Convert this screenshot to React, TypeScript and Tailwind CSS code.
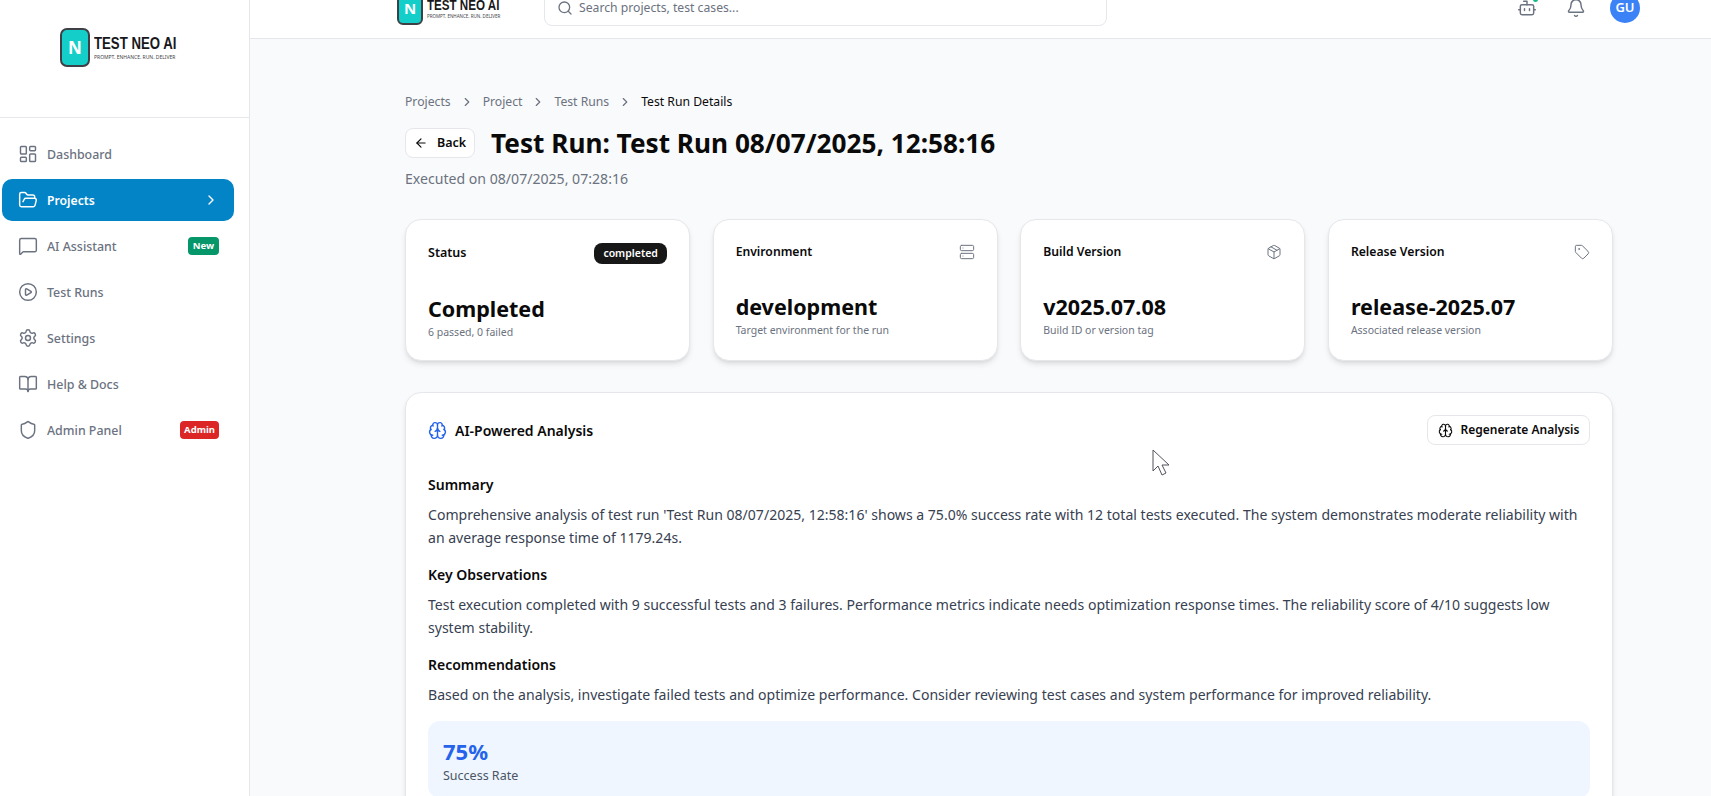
import {
  ArrowLeft,
  Bell,
  BookOpen,
  Bot,
  Brain,
  ChevronRight,
  CirclePlay,
  FolderOpen,
  LayoutDashboard,
  MessageSquare,
  Package,
  Search,
  Server,
  Settings,
  Shield,
  Tag,
} from "lucide-react";

const navItems = [
  { label: "Dashboard", icon: LayoutDashboard },
  { label: "Projects", icon: FolderOpen, active: true },
  { label: "AI Assistant", icon: MessageSquare, badge: "New", badgeClass: "w-[31px] bg-[#059669]" },
  { label: "Test Runs", icon: CirclePlay },
  { label: "Settings", icon: Settings },
  { label: "Help & Docs", icon: BookOpen },
  { label: "Admin Panel", icon: Shield, badge: "Admin", badgeClass: "w-[39px] bg-[#dc2626]" },
];

const crumbs = ["Projects", "Project", "Test Runs"];

const infoCards = [
  { label: "Environment", value: "development", note: "Target environment for the run", icon: Server },
  { label: "Build Version", value: "v2025.07.08", note: "Build ID or version tag", icon: Package },
  { label: "Release Version", value: "release-2025.07", note: "Associated release version", icon: Tag },
];

function Logo({ small }: { small?: boolean }) {
  return (
    <div className="flex items-center">
      <div
        className={
          small
            ? "flex h-[34px] w-[26px] items-center justify-center rounded-[6px] border-2 border-[#3f3f46] bg-[#14cfc9]"
            : "flex h-[39px] w-[30px] items-center justify-center rounded-[7px] border-2 border-[#3f3f46] bg-[#14cfc9]"
        }
      >
        <span className={small ? "text-[15px] font-bold text-white" : "text-[17px] font-bold text-white"}>N</span>
      </div>
      <div className={small ? "ml-[4px] flex w-[72px] flex-col" : "ml-[4px] flex w-[83px] flex-col gap-[2px]"}>
        <span
          className={
            small
              ? "origin-left scale-x-[0.8] font-['Liberation_Sans',sans-serif] text-[14.5px] leading-[16px] font-bold whitespace-nowrap text-[#18181b]"
              : "origin-left scale-x-[0.8] font-['Liberation_Sans',sans-serif] text-[16.5px] leading-[18px] font-bold whitespace-nowrap text-[#18181b]"
          }
        >
          TEST NEO AI
        </span>
        <span
          className={
            small
              ? "text-[4.5px] leading-[6px] whitespace-nowrap text-[#3f3f46]"
              : "text-[5px] leading-[7px] whitespace-nowrap text-[#3f3f46]"
          }
        >
          PROMPT. ENHANCE. RUN. DELIVER
        </span>
      </div>
    </div>
  );
}

export default function App() {
  return (
    <div className="flex h-[796px] w-full overflow-hidden bg-white font-['Noto_Sans',sans-serif] text-[#0a0a0a]">
      <aside className="flex w-[250px] shrink-0 flex-col border-r border-[#e5e7eb] bg-white">
        <div className="flex h-[118px] shrink-0 items-start border-b border-[#e5e7eb] pt-[28px] pl-[60px]">
          <Logo />
        </div>
        <nav className="flex flex-col gap-1 pt-[15px] pr-[15px] pl-[2px]">
          {navItems.map((item) => (
            <div
              key={item.label}
              className={
                item.active
                  ? "flex h-[42px] items-center gap-[9px] rounded-[10px] bg-[#0284c7] pr-[15px] pl-[16px] text-white"
                  : "flex h-[42px] items-center gap-[9px] rounded-[10px] pr-[15px] pl-[16px] text-[#6b7280]"
              }
            >
              <item.icon size={20} strokeWidth={1.75} />
              <span
                className={
                  item.active
                    ? "flex-1 pt-[2px] text-[12.2px] font-semibold"
                    : "flex-1 pt-[2px] text-[12.4px] font-medium"
                }
              >
                {item.label}
              </span>
              {item.active && <ChevronRight size={16} />}
              {item.badge && (
                <span
                  className={`flex h-[18px] items-center justify-center rounded-[4px] text-[9.5px] font-bold text-white ${item.badgeClass}`}
                >
                  {item.badge}
                </span>
              )}
            </div>
          ))}
        </nav>
      </aside>

      <div className="relative flex min-w-0 flex-1 flex-col bg-[#f9fafb]">
        <header className="h-[39px] shrink-0 overflow-hidden border-b border-[#e5e7eb] bg-white">
          <div className="-mt-[22px] flex h-[60px] items-center pr-[71px] pl-[147px]">
            <Logo small />
            <div className="ml-[45px] flex h-9 w-[563px] items-center gap-[6px] rounded-lg border border-[#e5e7eb] bg-white px-3">
              <Search size={16} className="text-[#6b7280]" />
              <span className="text-[12.2px] text-[#6b7280]">Search projects, test cases...</span>
            </div>
            <div className="ml-auto flex items-center">
              <div className="relative">
                <Bot size={20} strokeWidth={1.75} className="text-[#6b7280]" />
                <span className="absolute -top-[1px] -right-[1px] size-[5px] rounded-full bg-[#10b981]" />
              </div>
              <Bell size={20} strokeWidth={1.75} className="ml-[29px] text-[#6b7280]" />
              <div className="ml-[24px] flex size-[30px] items-center justify-center rounded-full bg-[#3b82f6] text-[13px] font-semibold text-white">
                GU
              </div>
            </div>
          </div>
        </header>

        <main className="flex-1 pt-[53px] pr-[98px] pl-[155px]">
          <div className="flex h-5 items-center gap-[9px] text-[12.2px] text-[#6b7280]">
            {crumbs.map((crumb) => (
              <div key={crumb} className="flex items-center gap-[9px]">
                <span>{crumb}</span>
                <ChevronRight size={14} />
              </div>
            ))}
            <span className="text-[#0a0a0a]">Test Run Details</span>
          </div>

          <div className="mt-[15px] flex items-center gap-4">
            <button className="flex h-[30px] w-[70px] items-center justify-center gap-[9px] rounded-lg border border-[#e5e7eb] bg-white text-[12.5px] font-semibold">
              <ArrowLeft size={14} />
              Back
            </button>
            <h1 className="text-[26.2px] leading-8 font-bold">Test Run: Test Run 08/07/2025, 12:58:16</h1>
          </div>
          <p className="mt-[10px] text-[14.1px] leading-5 text-[#6b7280]">Executed on 08/07/2025, 07:28:16</p>

          <div className="mt-[30px] grid grid-cols-4 gap-[22.5px]">
            <div className="h-[142px] rounded-2xl border border-[#e5e7eb] bg-white px-[22px] pt-[23px] shadow-md">
              <div className="flex h-[21px] items-center justify-between">
                <span className="text-[12.5px] font-semibold">Status</span>
                <span className="flex h-[21px] w-[73px] items-center justify-center rounded-lg bg-[#171717] text-[10.5px] font-semibold text-white">
                  completed
                </span>
              </div>
              <div className="mt-[30px] text-[21.5px] leading-[30px] font-bold">Completed</div>
              <div className="text-[10.5px] leading-4 text-[#6b7280]">6 passed, 0 failed</div>
            </div>
            {infoCards.map((card) => (
              <div
                key={card.label}
                className="h-[142px] rounded-2xl border border-[#e5e7eb] bg-white px-[22px] pt-[22px] shadow-md"
              >
                <div className="flex h-5 items-center justify-between">
                  <span className="pt-[1px] text-[12.2px] font-semibold">{card.label}</span>
                  <card.icon size={16} strokeWidth={1.5} className="text-[#6b7280]" />
                </div>
                <div className="mt-[30px] text-[21.5px] leading-[30px] font-bold">{card.value}</div>
                <div className="text-[10.5px] leading-4 text-[#6b7280]">{card.note}</div>
              </div>
            ))}
          </div>

          <section className="mt-[31px] rounded-2xl border border-[#e5e7eb] bg-white px-[22px] pt-[22px] pb-6 shadow-md">
            <div className="flex h-[30px] items-center justify-between">
              <div className="flex items-center gap-2">
                <Brain size={19} strokeWidth={1.75} className="text-[#2563eb]" />
                <h2 className="text-[14px] font-semibold">AI-Powered Analysis</h2>
              </div>
              <button className="flex h-[30px] w-[163px] items-center justify-center gap-2 rounded-lg border border-[#e5e7eb] bg-white text-[12px] font-semibold">
                <Brain size={15} strokeWidth={1.75} />
                Regenerate Analysis
              </button>
            </div>

            <h3 className="mt-[30px] text-[14px] leading-5 font-semibold">Summary</h3>
            <p className="mt-[8px] text-[14.06px] leading-[23px] text-[#374151]">
              Comprehensive analysis of test run 'Test Run 08/07/2025, 12:58:16' shows a 75.0% success rate with 12
              total tests executed. The system demonstrates moderate reliability with an average response time of
              1179.24s.
            </p>
            <h3 className="mt-[16px] text-[14px] leading-5 font-semibold">Key Observations</h3>
            <p className="mt-[8px] text-[14.06px] leading-[23px] text-[#374151]">
              Test execution completed with 9 successful tests and 3 failures. Performance metrics indicate needs
              optimization response times. The reliability score of 4/10 suggests low system stability.
            </p>
            <h3 className="mt-[16px] text-[14px] leading-5 font-semibold">Recommendations</h3>
            <p className="mt-[8px] text-[14.06px] leading-[23px] text-[#374151]">
              Based on the analysis, investigate failed tests and optimize performance. Consider reviewing test cases
              and system performance for improved reliability.
            </p>

            <div className="mt-[15px] rounded-xl bg-[#eff6ff] px-[15px] pt-[14px] pb-[13px]">
              <div className="text-[22px] leading-8 font-bold text-[#2563eb]">75%</div>
              <div className="text-[12.5px] leading-[18px] text-[#4b5563]">Success Rate</div>
            </div>
          </section>
        </main>

        <svg
          className="absolute top-[449px] left-[902px]"
          width="20"
          height="28"
          viewBox="0 0 20 28"
          fill="white"
          stroke="#52525b"
          strokeWidth="1"
        >
          <path d="M1 1v21l5-5 4 9 4-2-4-8h7z" />
        </svg>
      </div>
    </div>
  );
}
